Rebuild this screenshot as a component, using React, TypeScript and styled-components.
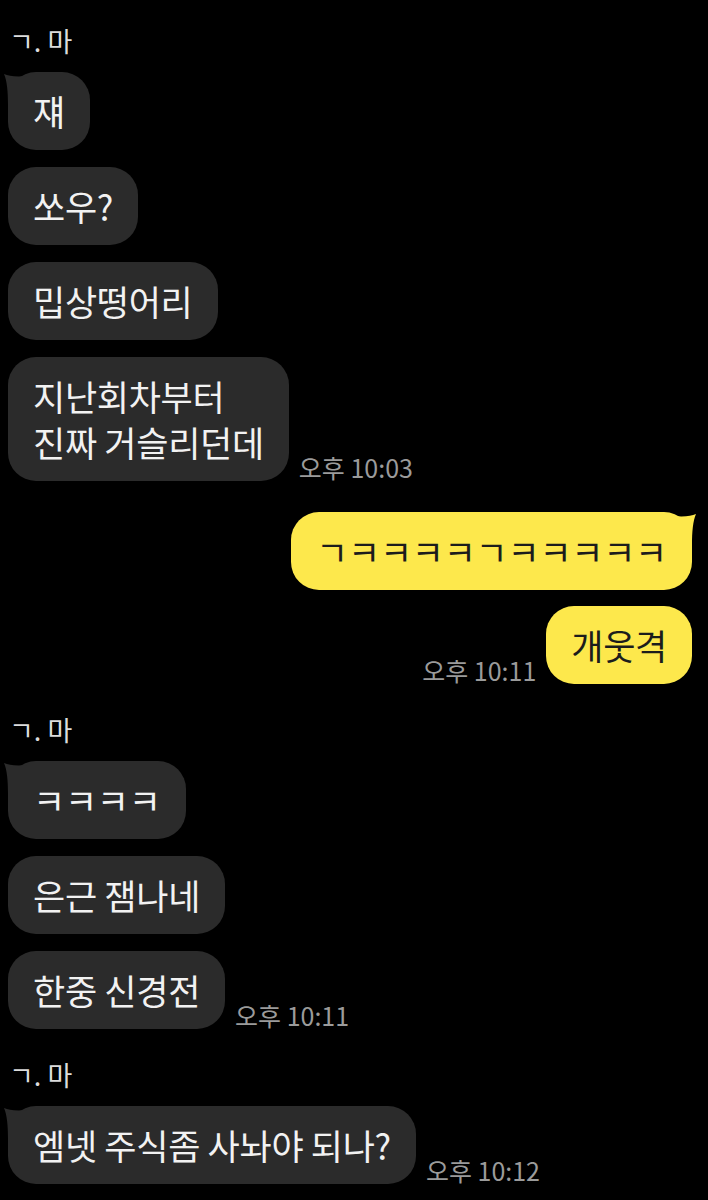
import React from 'react';
import styled, { createGlobalStyle } from 'styled-components';

type Side = 'left' | 'right';

interface IMessage {
	text: string;
	time?: string;
}

interface IGroup {
	side: Side;
	sender?: string;
	messages: IMessage[];
}

const groups: IGroup[] = [
	{
		side: 'left',
		sender: 'ㄱ. 마',
		messages: [{ text: '쟤' }, { text: '쏘우?' }, { text: '밉상떵어리' }, { text: '지난회차부터\n진짜 거슬리던데', time: '오후 10:03' }],
	},
	{
		side: 'right',
		messages: [{ text: 'ㄱㅋㅋㅋㅋㄱㅋㅋㅋㅋㅋ' }, { text: '개웃격', time: '오후 10:11' }],
	},
	{
		side: 'left',
		sender: 'ㄱ. 마',
		messages: [{ text: 'ㅋㅋㅋㅋ' }, { text: '은근 잼나네' }, { text: '한중 신경전', time: '오후 10:11' }],
	},
	{
		side: 'left',
		sender: 'ㄱ. 마',
		messages: [{ text: '엠넷 주식좀 사놔야 되나?', time: '오후 10:12' }],
	},
];

const Tail = ({ side }: { side: Side }) => (
	<TailSvg side={side} width="24" height="32" viewBox="0 0 24 32">
		<path d="M1 1 C6 3 12 4 24 3 L24 32 L5 32 C5 18 4 8 1 1 Z" fill="currentColor" />
	</TailSvg>
);

const App = () => {
	return (
		<>
			<GlobalStyle />
			<Screen>
				{groups.map((group, gi) => (
					<Group key={gi} side={group.side}>
						{group.sender && <Sender>{group.sender}</Sender>}
						{group.messages.map((msg, mi) => (
							<Row key={mi} side={group.side}>
								{group.side === 'right' && msg.time && <Time>{msg.time}</Time>}
								<Bubble side={group.side}>
									{mi === 0 && <Tail side={group.side} />}
									{msg.text}
								</Bubble>
								{group.side === 'left' && msg.time && <Time>{msg.time}</Time>}
							</Row>
						))}
					</Group>
				))}
			</Screen>
		</>
	);
};

export default App;

// styles
const GlobalStyle = createGlobalStyle`
	body {
		margin: 0;
		background: #000000;
		font-family: 'Noto Sans CJK KR', 'Noto Sans', sans-serif;
	}
`;

const Screen = styled.div`
	width: 708px;
	height: 1200px;
	box-sizing: border-box;
	overflow: hidden;
	background: #000000;
	display: flex;
	flex-direction: column;
	gap: 31px;
	padding: 26px 16px 0 8px;
`;

const Group = styled.div<{ side: Side }>`
	display: flex;
	flex-direction: column;
	gap: ${({ side }) => (side === 'right' ? '16px' : '17px')};
`;

const Sender = styled.div`
	font-size: 27px;
	line-height: 30px;
	color: #dcdcdc;
	padding-left: 1px;
	margin-bottom: -1px;
`;

const Row = styled.div<{ side: Side }>`
	display: flex;
	align-items: flex-end;
	justify-content: ${({ side }) => (side === 'right' ? 'flex-end' : 'flex-start')};
	gap: 10px;
`;

const Bubble = styled.div<{ side: Side }>`
	position: relative;
	padding: 16px 25px;
	border-radius: 28px;
	font-size: 35px;
	line-height: 46px;
	letter-spacing: -0.3px;
	white-space: pre-line;
	background: ${({ side }) => (side === 'right' ? '#fde84c' : '#2b2b2b')};
	color: ${({ side }) => (side === 'right' ? '#1c1c1c' : '#f2f2f2')};
`;

const TailSvg = styled.svg<{ side: Side }>`
	position: absolute;
	top: 1px;
	${({ side }) => (side === 'right' ? 'right: -5px; transform: scaleX(-1);' : 'left: -5px;')}
	color: ${({ side }) => (side === 'right' ? '#fde84c' : '#2b2b2b')};
`;

const Time = styled.div`
	font-size: 25px;
	line-height: 26px;
	color: #9b9b9b;
	white-space: nowrap;
	margin-bottom: 1px;
`;
